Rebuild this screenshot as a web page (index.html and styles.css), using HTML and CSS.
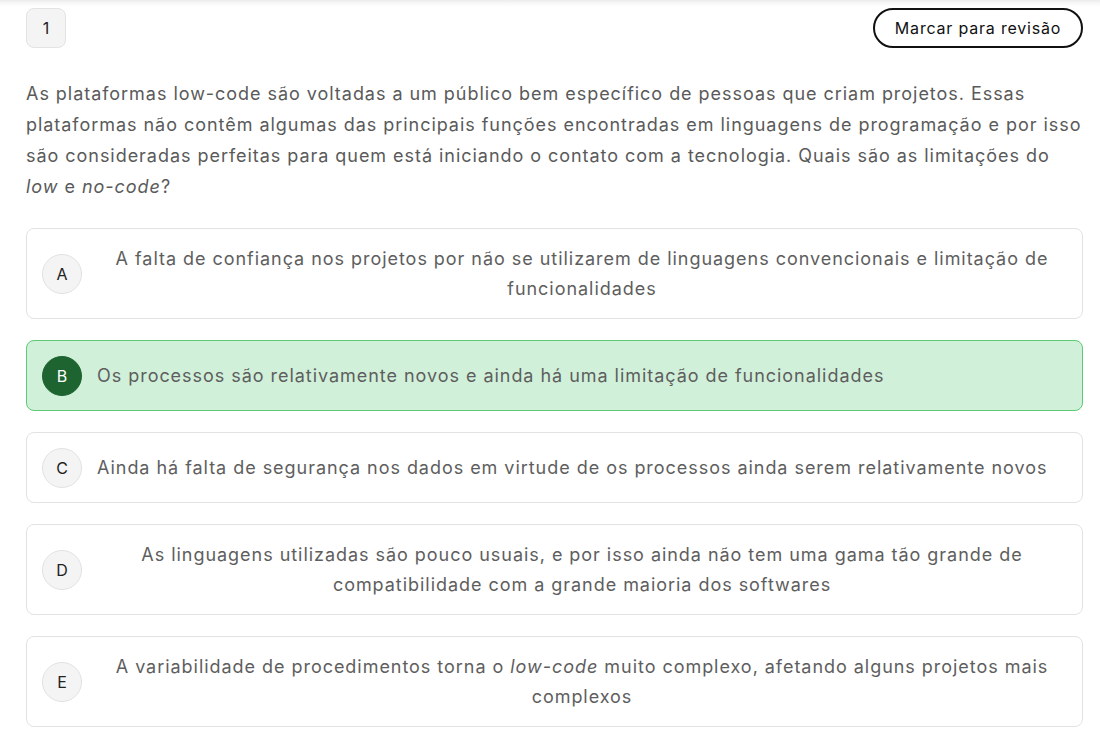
FILE: index.html
```html
<!DOCTYPE html>
<html lang="pt-BR">
<head>
<meta charset="utf-8">
<title>Questão 1</title>
<link rel="stylesheet" href="styles.css">
</head>
<body>
<div class="page">
  <div class="header">
    <div class="qnum">1</div>
    <button class="mark">Marcar para revisão</button>
  </div>
  <p class="question">As plataformas low-code são voltadas a um público bem específico de pessoas que criam projetos. Essas<br>plataformas não contêm algumas das principais funções encontradas em linguagens de programação e por isso<br>são consideradas perfeitas para quem está iniciando o contato com a tecnologia. Quais são as limitações do<br><em>low</em> e <em>no-code</em>?</p>
  <div class="options">
    <div class="option">
      <span class="letter">A</span>
      <span class="text center">A falta de confiança nos projetos por não se utilizarem de linguagens convencionais e limitação de funcionalidades</span>
    </div>
    <div class="option selected">
      <span class="letter">B</span>
      <span class="text">Os processos são relativamente novos e ainda há uma limitação de funcionalidades</span>
    </div>
    <div class="option">
      <span class="letter">C</span>
      <span class="text">Ainda há falta de segurança nos dados em virtude de os processos ainda serem relativamente novos</span>
    </div>
    <div class="option">
      <span class="letter">D</span>
      <span class="text center">As linguagens utilizadas são pouco usuais, e por isso ainda não tem uma gama tão grande de compatibilidade com a grande maioria dos softwares</span>
    </div>
    <div class="option">
      <span class="letter">E</span>
      <span class="text center">A variabilidade de procedimentos torna o <em>low-code</em> muito complexo, afetando alguns projetos mais complexos</span>
    </div>
  </div>
</div>
</body>
</html>
```

FILE: styles.css
```css
* { box-sizing: border-box; }
html, body { margin: 0; padding: 0; }
body {
  font-family: Inter, "Noto Sans", sans-serif;
  background: #fff linear-gradient(to bottom, #ececec 0px, #f7f7f7 3px, #ffffff 7px) no-repeat;
  background-size: 100% 8px;
  color: #222;
}
.page {
  padding: 8px 17px 0 26px;
  overflow: hidden;
}
.header {
  display: flex;
  justify-content: space-between;
  align-items: center;
  height: 40px;
}
.qnum {
  width: 40px;
  height: 40px;
  border: 1px solid #e3e3e3;
  background: #f4f4f4;
  border-radius: 8px;
  display: flex;
  align-items: center;
  justify-content: center;
  font-size: 16px;
  color: #222;
}
.mark {
  height: 40px;
  width: 210px;
  border: 2px solid #111;
  border-radius: 20px;
  background: #fff;
  font-family: Inter, "Noto Sans", sans-serif;
  font-size: 16px;
  letter-spacing: 0.8px;
  color: #111;
  padding: 0;
}
.question {
  margin: 30px 0 0 0;
  font-size: 18px;
  letter-spacing: 0.96px;
  line-height: 31px;
  color: #5a5a5a;
  white-space: nowrap;
}
.question em { font-style: italic; }
.options {
  margin-top: 26px;
  display: flex;
  flex-direction: column;
  gap: 21px;
}
.option {
  display: flex;
  align-items: center;
  gap: 15px;
  border: 1px solid #e2e2e2;
  border-radius: 8px;
  padding: 14.5px 15px;
  background: #fff;
}
.option.selected {
  background: #d1f0d9;
  border-color: #5ccb73;
}
.letter {
  flex: 0 0 40px;
  width: 40px;
  height: 40px;
  border-radius: 50%;
  background: #f4f4f4;
  border: 1px solid #e2e2e2;
  display: flex;
  align-items: center;
  justify-content: center;
  font-size: 16px;
  color: #222;
}
.selected .letter {
  background: #1d6430;
  border-color: #1d6430;
  color: #fff;
}
.text {
  flex: 1;
  font-size: 18px;
  letter-spacing: 0.96px;
  line-height: 30px;
  color: #5e5e5e;
}
.text.center { text-align: center; }
.text em { font-style: italic; }
```
